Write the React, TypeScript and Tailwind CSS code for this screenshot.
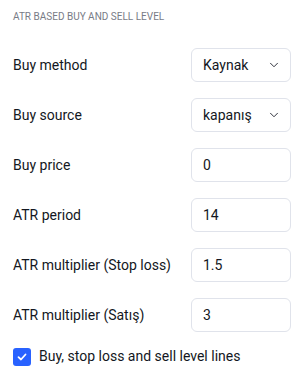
import { ChevronDown } from "lucide-react"

const font = { fontFamily: "Roboto, sans-serif" }

type Row = { label: string; value: string; select?: boolean }

const rows: Row[] = [
  { label: "Buy method", value: "Kaynak", select: true },
  { label: "Buy source", value: "kapanış", select: true },
  { label: "Buy price", value: "0" },
  { label: "ATR period", value: "14" },
  { label: "ATR multiplier (Stop loss)", value: "1.5" },
  { label: "ATR multiplier (Satış)", value: "3" },
]

function Field({ row }: { row: Row }) {
  return (
    <div className="flex h-[50px] items-center justify-between">
      <span className="text-[14px] text-[#131722]">{row.label}</span>
      <div className="flex h-[34px] w-[100px] items-center justify-between rounded-md border border-[#e0e3eb] bg-white pl-[11px] pr-[9px]">
        <span className="text-[14px] text-[#131722]">{row.value}</span>
        {row.select && <ChevronDown size={14} strokeWidth={1.5} className="text-[#131722]" />}
      </div>
    </div>
  )
}

export default function App() {
  return (
    <div className="h-[375px] w-[306px] bg-white pl-[13px] pr-[15px]" style={font}>
      <div className="pt-[9px] text-[10px] uppercase text-[#787b86]">ATR based buy and sell level</div>
      <div className="mt-[16px]">
        {rows.map((r) => (
          <Field key={r.label} row={r} />
        ))}
      </div>
      <div className="mt-[6px] flex items-center gap-[8px]">
        <div className="flex h-[18px] w-[18px] items-center justify-center rounded-[3px] bg-[#2962ff]">
          <svg width="12" height="12" viewBox="0 0 12 12" fill="none">
            <path d="M2.5 6.2 L5 8.5 L9.5 3.5" stroke="white" strokeWidth="1.8" strokeLinecap="round" strokeLinejoin="round" />
          </svg>
        </div>
        <span className="text-[14px] text-[#131722]">Buy, stop loss and sell level lines</span>
      </div>
    </div>
  )
}
